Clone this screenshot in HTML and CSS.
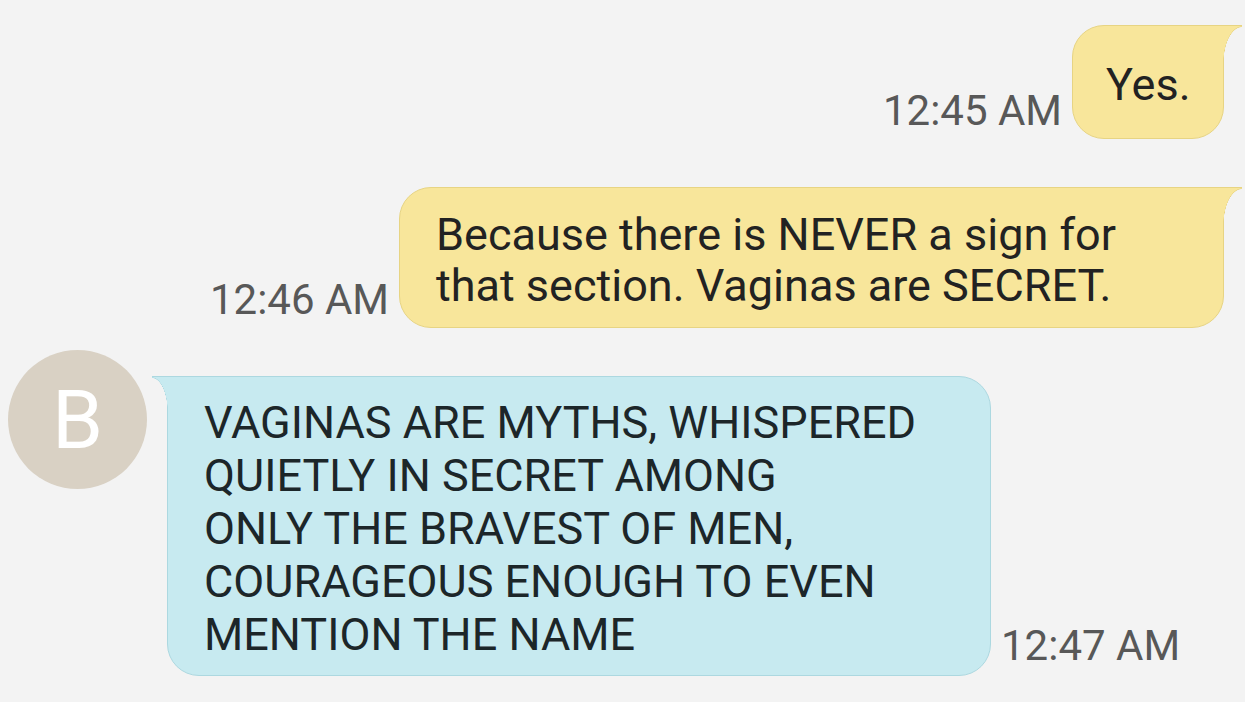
FILE: index.html
```html
<!DOCTYPE html>
<html>
<head>
    <title>Messages</title>
    <link rel="stylesheet" href="styles.css">
</head>
<body>
    <div class="thread">
        <div class="row sent first">
            <div class="time">12:45 AM</div>
            <div class="bubble sent short">Yes.</div>
        </div>

        <div class="row sent">
            <div class="time">12:46 AM</div>
            <div class="bubble sent wide">Because there is NEVER a sign for<br>that section. Vaginas are SECRET.</div>
        </div>

        <div class="row received">
            <div class="avatar">B</div>
            <div class="bubble received">VAGINAS ARE MYTHS, WHISPERED<br>QUIETLY IN SECRET AMONG<br>ONLY THE BRAVEST OF MEN,<br>COURAGEOUS ENOUGH TO EVEN<br>MENTION THE NAME</div>
            <div class="time after">12:47 AM</div>
        </div>
    </div>
</body>
</html>
```

FILE: styles.css
```css
body {
    margin: 0;
    background: #f3f3f3;
    font-family: Roboto, "Noto Sans", sans-serif;
    color: #222;
}

.thread {
    display: flex;
    flex-direction: column;
    padding: 25px 21px 0 8px;
    height: 702px;
    box-sizing: border-box;
    overflow: hidden;
}

.row {
    display: flex;
    align-items: flex-end;
}

.row.sent {
    justify-content: flex-end;
    margin-top: 48px;
}

.row.sent.first {
    margin-top: 0;
}

.row.received {
    align-items: flex-start;
    margin-top: 22px;
}

.time {
    font-size: 42px;
    line-height: 48px;
    color: #585858;
    margin-right: 10px;
    margin-bottom: 4px;
    white-space: nowrap;
}

.time.after {
    align-self: flex-end;
    margin: 0 0 6px 10px;
}

.bubble {
    position: relative;
    font-size: 45px;
    line-height: 51px;
    border: 1px solid transparent;
}

.bubble.sent {
    background: #f8e69b;
    border-color: #e7d483;
    border-radius: 32px 0 32px 32px;
}

.bubble.sent::after {
    content: "";
    position: absolute;
    top: -1px;
    right: -19px;
    width: 19px;
    height: 38px;
    background:
        linear-gradient(#e7d483, #e7d483) top / 100% 1px no-repeat,
        radial-gradient(ellipse 19px 37px at 100% 100%, transparent 96%, #e7d483 98%, #f8e69b 100%);
}

.bubble.short {
    width: 84px;
    padding: 33px 33px 28px 33px;
}

.bubble.wide {
    width: 750px;
    padding: 21px 37px 16px 36px;
}

.bubble.received {
    width: 748px;
    margin: 26px 0 0 20px;
    padding: 19px 38px 14px 36px;
    line-height: 53px;
    background: #c7eaf0;
    border-color: #acd8e0;
    border-radius: 0 32px 32px 32px;
    color: #1c2629;
}

.bubble.received::before {
    content: "";
    position: absolute;
    top: -1px;
    left: -16px;
    width: 16px;
    height: 36px;
    background:
        linear-gradient(#acd8e0, #acd8e0) top / 100% 1px no-repeat,
        radial-gradient(ellipse 16px 35px at 0% 100%, transparent 96%, #acd8e0 98%, #c7eaf0 100%);
}

.avatar {
    width: 139px;
    height: 139px;
    flex-shrink: 0;
    border-radius: 50%;
    background: #d9d1c4;
    color: #fff;
    font-size: 82px;
    display: flex;
    align-items: center;
    justify-content: center;
}
```
